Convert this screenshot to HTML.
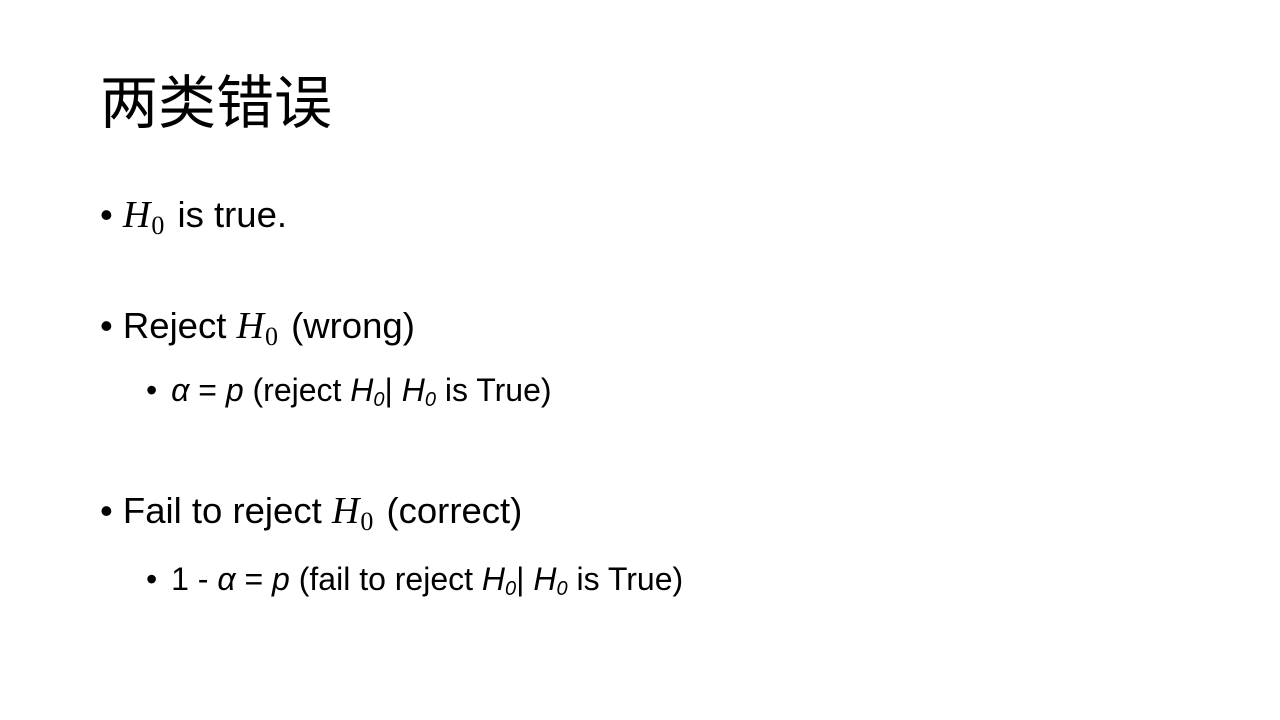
<!DOCTYPE html>
<html><head><meta charset="utf-8"><style>
body{margin:0;width:1280px;height:720px;background:#fff;overflow:hidden;position:relative;font-family:"Liberation Sans",sans-serif;color:#000}
.t{position:absolute;left:100px;top:75px;font-size:58px;font-family:"Liberation Sans","Noto Sans CJK SC",sans-serif;line-height:1}
.l{position:absolute;white-space:nowrap;line-height:1}
.b1{left:100px;font-size:36.5px}
.b2{left:146px;font-size:32px}
.b2 .bu{margin-right:5px}
.m{font-family:"Liberation Serif",serif;font-style:italic;font-size:38px;margin-right:3px}
.m sub{font-style:normal;font-size:26px;vertical-align:-7px;margin-left:1px}
i sub{font-size:20px;vertical-align:-5px}
</style></head><body>
<div class="t">两类错误</div>
<div class="l b1" style="top:196px">• <span class="m">H<sub>0</sub></span> is true.</div>
<div class="l b1" style="top:307px">• Reject <span class="m">H<sub>0</sub></span> (wrong)</div>
<div class="l b2" style="top:374px"><span class="bu">•</span> <i>α</i> = <i>p</i> (reject <i>H<sub>0</sub></i>| <i>H<sub>0</sub></i> is True)</div>
<div class="l b1" style="top:492px">• Fail to reject <span class="m">H<sub>0</sub></span> (correct)</div>
<div class="l b2" style="top:563px"><span class="bu">•</span> 1 - <i>α</i> = <i>p</i> (fail to reject <i>H<sub>0</sub></i>| <i>H<sub>0</sub></i> is True)</div>
</body></html>
